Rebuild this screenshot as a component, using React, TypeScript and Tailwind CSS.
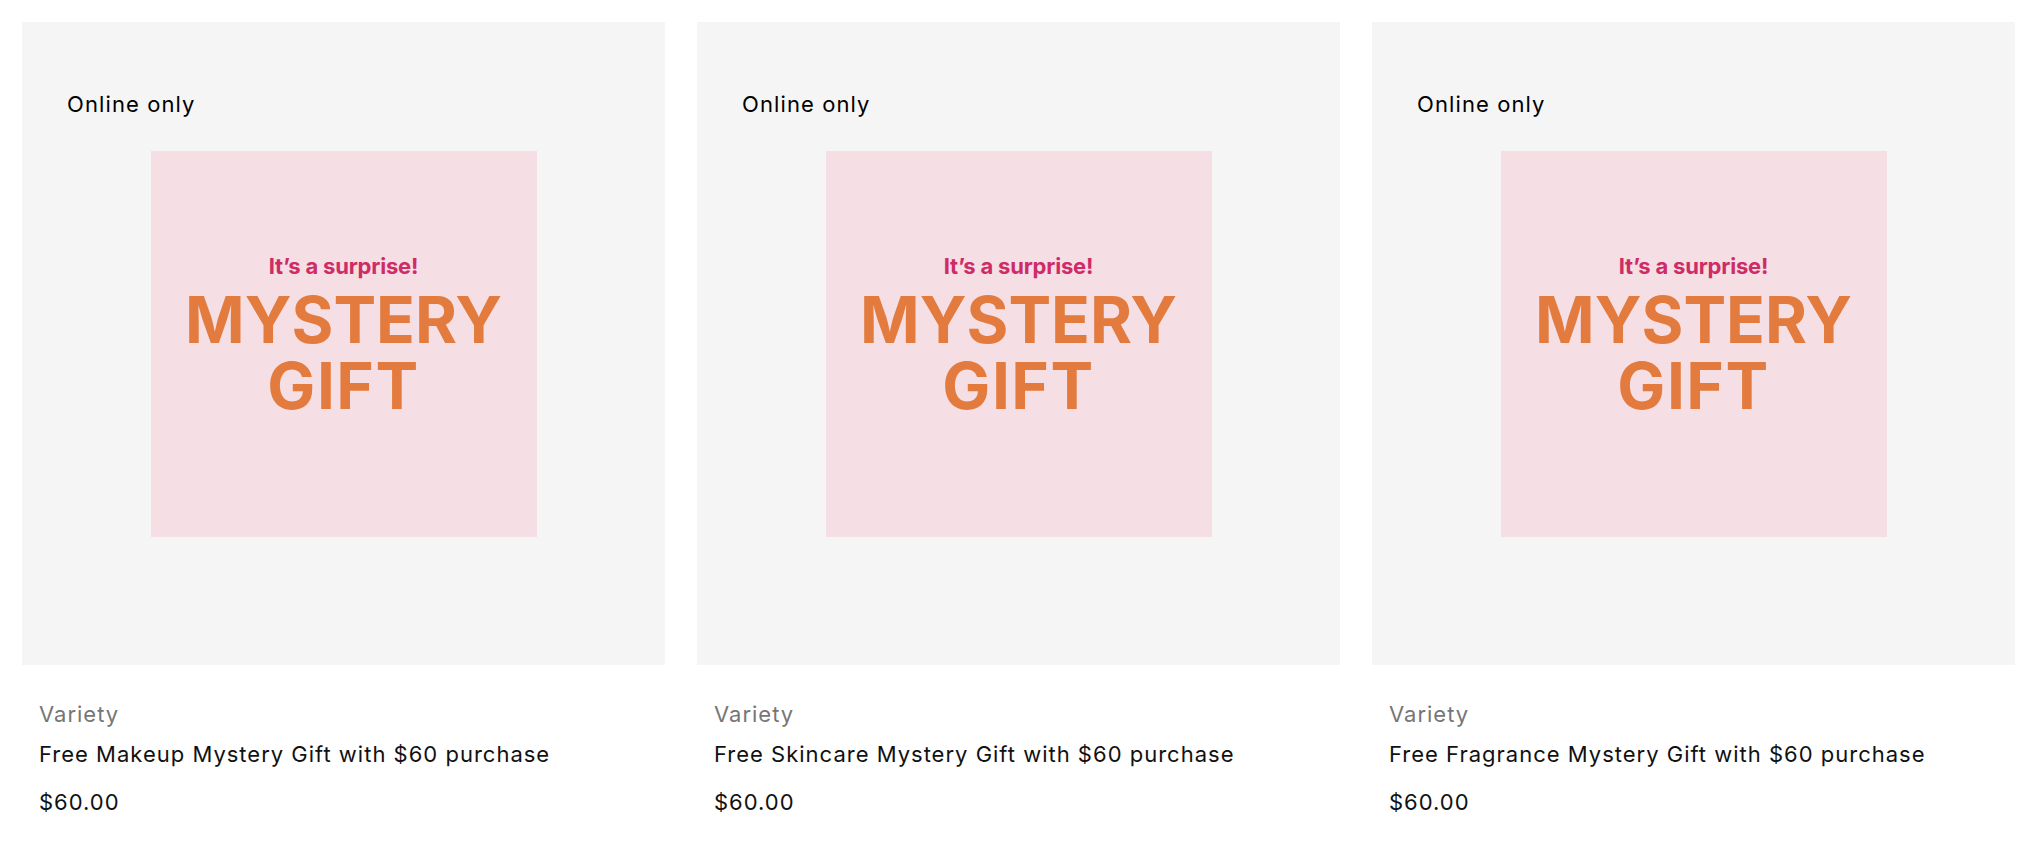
import React from "react";

const products = [
    { brand: "Variety", name: "Free Makeup Mystery Gift with $60 purchase", price: "$60.00" },
    { brand: "Variety", name: "Free Skincare Mystery Gift with $60 purchase", price: "$60.00" },
    { brand: "Variety", name: "Free Fragrance Mystery Gift with $60 purchase", price: "$60.00" },
];

const ProductCard = ({ brand, name, price }: { brand: string; name: string; price: string }) => {
    return (
        <div className="w-[643px] shrink-0">
            {/* Image area */}
            <div className="relative w-[643px] h-[643px] bg-[#f5f5f5] flex items-center justify-center">
                <span className="absolute left-[45px] top-[68px] text-[22px] leading-[28px] tracking-[1.1px] text-black">
                    Online only
                </span>
                <div className="w-[386px] h-[386px] bg-[#f5dee4] flex flex-col items-center pt-[102px]">
                    <span className="text-[22px] leading-[27px] font-bold text-[#cf2b67] tracking-[-0.2px]">
                        It’s a surprise!
                    </span>
                    <span className="mt-[7px] text-[64px] leading-[66px] font-bold text-[#e27b3d]">
                        MYSTERY
                    </span>
                    <span className="text-[64px] leading-[66px] font-bold tracking-[1.5px] text-[#e27b3d]">
                        GIFT
                    </span>
                </div>
            </div>

            {/* Details */}
            <div className="pl-[17px] pt-[35px] text-[22px] leading-[28px] tracking-[1px]">
                <div className="text-[#767676]">{brand}</div>
                <div className="mt-[12px] text-[#111111]">{name}</div>
                <div className="mt-[20px] text-[#111111]">{price}</div>
            </div>
        </div>
    );
};

export default function App() {
    return (
        <div className="min-h-[858px] w-[2032px] bg-white pt-[22px] pl-[22px] font-['Inter',sans-serif]">
            <div className="flex gap-[32px]">
                {products.map((p) => (
                    <ProductCard key={p.name} {...p} />
                ))}
            </div>
        </div>
    );
}
